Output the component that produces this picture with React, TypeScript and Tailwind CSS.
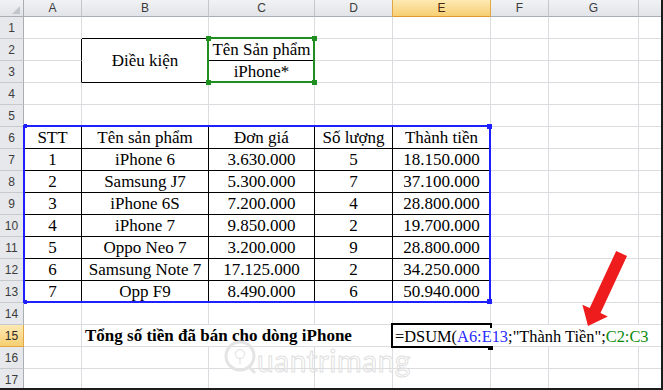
import React from 'react';

const COLS = ['A', 'B', 'C', 'D', 'E', 'F', 'G', 'H'];

type CellDef = {
  text?: React.ReactNode;
  align?: 'center' | 'left';
  bold?: boolean;
  rowSpan2?: boolean;
  colSpan?: 3 | 4;
};

const data: (string | number)[][] = [
  [1, 'iPhone 6', '3.630.000', 5, '18.150.000'],
  [2, 'Samsung J7', '5.300.000', 7, '37.100.000'],
  [3, 'iPhone 6S', '7.200.000', 4, '28.800.000'],
  [4, 'iPhone 7', '9.850.000', 2, '19.700.000'],
  [5, 'Oppo Neo 7', '3.200.000', 9, '28.800.000'],
  [6, 'Samsung Note 7', '17.125.000', 2, '34.250.000'],
  [7, 'Opp F9', '8.490.000', 6, '50.940.000'],
];

function borderCls(rb: boolean, bb: boolean, noRight: boolean) {
  if (noRight) return bb ? 'border-b border-b-black' : 'border-b border-b-[#dadcdf]';
  if (rb && bb) return 'border-r border-b border-black';
  if (rb) return 'border-r border-b border-r-black border-b-[#dadcdf]';
  if (bb) return 'border-r border-b border-r-[#dadcdf] border-b-black';
  return 'border-r border-b border-[#dadcdf]';
}

function getCell(col: string, row: number): CellDef | null {
  if (col === 'B' && row === 3) return null;
  if (row === 15 && (col === 'C' || col === 'D' || col === 'F' || col === 'G' || col === 'H')) return null;
  if (col === 'B' && row === 2) return { text: 'Điều kiện', align: 'center', rowSpan2: true };
  if (col === 'C' && row === 2) return { text: 'Tên Sản phẩm', align: 'center' };
  if (col === 'C' && row === 3) return { text: 'iPhone*', align: 'center' };
  if (row === 6) {
    const h: Record<string, string> = { A: 'STT', B: 'Tên sản phẩm', C: 'Đơn giá', D: 'Số lượng', E: 'Thành tiền' };
    if (h[col]) return { text: h[col], align: 'center' };
  }
  if (row >= 7 && row <= 13) {
    const idx = COLS.indexOf(col);
    if (idx <= 4) return { text: data[row - 7][idx], align: 'center' };
  }
  if (row === 15 && col === 'B') return { text: 'Tổng số tiền đã bán cho dòng iPhone', align: 'left', bold: true, colSpan: 3 };
  if (row === 15 && col === 'E') return { text: '', align: 'left', colSpan: 4 };
  return { text: '' };
}

function isRightBlack(col: string, row: number) {
  const idx = COLS.indexOf(col);
  if (col === 'A' && (row === 2 || row === 3)) return true;
  if ((col === 'B' || col === 'C') && (row === 2 || row === 3)) return true;
  if (row >= 6 && row <= 13 && idx <= 4) return true;
  return false;
}

function isBottomBlack(col: string, row: number) {
  const idx = COLS.indexOf(col);
  if ((col === 'B' || col === 'C') && row === 1) return true;
  if ((col === 'B' || col === 'C') && (row === 2 || row === 3)) return true;
  if (row === 5 && idx <= 4) return true;
  if (row >= 6 && row <= 13 && idx <= 4) return true;
  return false;
}

function ColHeader({ c }: { c: string }) {
  const base = "flex items-center justify-center text-[12px] font-['Liberation_Sans',Arial,sans-serif] border-b";
  if (c === 'E')
    return (
      <div className={`${base} border-r bg-linear-to-b from-[#fde9b2] to-[#f7cf72] border-r-[#e3a645] border-b-[#e09a30] text-[#4a2a10]`}>
        {c}
      </div>
    );
  if (c === 'H')
    return <div className={`${base} bg-linear-to-b from-[#f1f2f4] to-[#e1e4e8] border-b-[#a9aeb4] text-[#3c3c3c]`}></div>;
  if (c === 'D')
    return (
      <div className={`${base} border-r bg-linear-to-b from-[#f1f2f4] to-[#e1e4e8] border-r-[#e3a645] border-b-[#a9aeb4] text-[#3c3c3c]`}>
        {c}
      </div>
    );
  return (
    <div className={`${base} border-r bg-linear-to-b from-[#f1f2f4] to-[#e1e4e8] border-r-[#c3c7cc] border-b-[#a9aeb4] text-[#3c3c3c]`}>
      {c}
    </div>
  );
}

function RowHeader({ r }: { r: number }) {
  const base = "flex items-center justify-center text-[12px] font-['Liberation_Sans',Arial,sans-serif] border-r border-b";
  if (r === 15)
    return (
      <div className={`${base} bg-linear-to-b from-[#fde9b2] to-[#f7cf72] border-r-[#e3a645] border-b-[#e3a645] text-[#2a2a2a]`}>{r}</div>
    );
  return <div className={`${base} bg-[#e6e8eb] border-r-[#a9aeb4] border-b-[#c6cace] text-[#3c3c3c]`}>{r}</div>;
}

export default function App() {
  const cells: React.ReactNode[] = [];
  cells.push(
    <div key="corner" className="relative border-r border-b border-r-[#a9aeb4] border-b-[#a9aeb4] bg-linear-to-b from-[#f1f2f4] to-[#e1e4e8]">
      <svg className="absolute right-[3px] bottom-[2px]" width="8" height="8" viewBox="0 0 8 8">
        <polygon points="8,0 8,8 0,8" fill="#c2c6cb" />
      </svg>
    </div>
  );
  COLS.forEach((c) => cells.push(<ColHeader key={`h${c}`} c={c} />));

  for (let r = 1; r <= 17; r++) {
    cells.push(<RowHeader key={`r${r}`} r={r} />);
    COLS.forEach((c) => {
      const def = getCell(c, r);
      if (!def) return;
      const rb = isRightBlack(c, r);
      const bb = isBottomBlack(c, r);
      const noRight = c === 'H' || (r === 15 && c === 'E');
      const bc = borderCls(rb, bb, noRight);
      const span = def.rowSpan2 ? 'row-span-2' : def.colSpan === 3 ? 'col-span-3' : def.colSpan === 4 ? 'col-span-4' : '';
      const align = def.align === 'left' ? 'justify-start pl-[3px]' : 'justify-center';
      cells.push(
        <div
          key={`${c}${r}`}
          className={`${bc} ${span} flex items-center ${align} whitespace-nowrap overflow-visible text-[17px] leading-[20px] text-black font-['Liberation_Serif','Times_New_Roman',serif] ${def.bold ? 'font-bold' : ''}`}
        >
          {def.text}
        </div>
      );
    });
  }

  return (
    <div className="relative w-[663px] h-[390px] overflow-hidden bg-white border-r-2 border-b-2 border-[#1c1c1c]">
      <div className="grid grid-cols-[24px_58px_127px_106px_78px_98px_58px_90px_1fr] grid-rows-[17px_repeat(17,22px)]">
        {cells}
      </div>

      {/* Watermark (under overlays) */}
      <svg className="absolute left-[222px] top-[338px] pointer-events-none" width="220" height="46" viewBox="0 0 220 46">
        <circle cx="18" cy="18" r="14" fill="none" stroke="#e4e4e4" strokeWidth="3" />
        <circle cx="18" cy="16" r="4.5" fill="none" stroke="#e6e6e6" strokeWidth="1.3" />
        <line x1="18" y1="21" x2="18" y2="26" stroke="#e6e6e6" strokeWidth="1.3" />
        <line x1="26" y1="28" x2="33" y2="35" stroke="#e4e4e4" strokeWidth="3" />
        <text x="35" y="34" fontSize="30" fontFamily="Lato, 'Liberation Sans', sans-serif" fill="none" stroke="#dfdfdf" strokeWidth="1" letterSpacing="0.5">
          uantrimang
        </text>
      </svg>

      {/* Green selection C2:C3 */}
      <div className="absolute left-[207px] top-[37px] w-[108px] h-[46px] border-2 border-[#1f8f1f]" />
      <div className="absolute left-[206px] top-[36px] w-[5px] h-[5px] bg-[#1f8f1f]" />
      <div className="absolute left-[312px] top-[36px] w-[5px] h-[5px] bg-[#1f8f1f]" />
      <div className="absolute left-[206px] top-[80px] w-[5px] h-[5px] bg-[#1f8f1f]" />
      <div className="absolute left-[312px] top-[80px] w-[5px] h-[5px] bg-[#1f8f1f]" />

      {/* Blue selection A6:E13 */}
      <div className="absolute left-[23px] top-[125px] w-[468px] h-[178px] border-2 border-[#1f1fff]" />
      <div className="absolute left-[24px] top-[124px] w-[3px] h-[4px] bg-[#1f1fff]" />
      <div className="absolute left-[487px] top-[124px] w-[5px] h-[5px] bg-[#1f1fff]" />
      <div className="absolute left-[24px] top-[300px] w-[3px] h-[4px] bg-[#1f1fff]" />
      <div className="absolute left-[487px] top-[299px] w-[5px] h-[5px] bg-[#1f1fff]" />

      {/* Active cell E15 with formula being edited */}
      <div className="absolute left-[391px] top-[323px] w-[101px] h-[25px] border-2 border-black" />
      <div className="absolute left-[488px] top-[345px] w-[5px] h-[5px] bg-black" />
      <div className="absolute left-[395px] top-[328px] h-[18px] flex items-center bg-white whitespace-nowrap text-[16.4px] leading-[18px] text-black font-['Liberation_Serif','Times_New_Roman',serif]">
        <span>=DSUM(</span>
        <span className="text-[#2b2bff]">A6:E13</span>
        <span>;"Thành Tiền";</span>
        <span className="text-[#0a8a0a]">C2:C3</span>
      </div>

      {/* Red arrow */}
      <svg className="absolute left-0 top-0 pointer-events-none" width="663" height="390" viewBox="0 0 663 390">
        <polygon
          points="616.2,250.9 627,255.9 600.5,313.1 607.8,316.5 588,326 582.4,304.7 589.7,308.1"
          fill="#ee1c1c"
        />
      </svg>
    </div>
  );
}
